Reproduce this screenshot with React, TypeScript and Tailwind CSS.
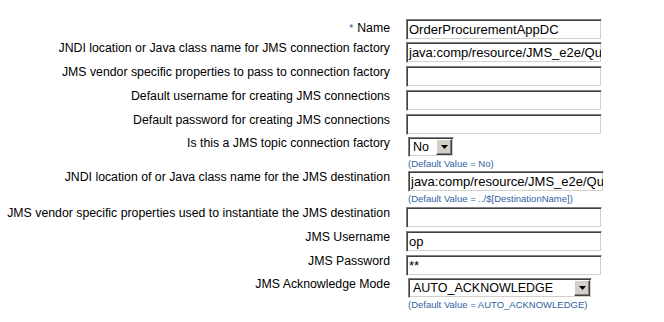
import type { ReactNode } from "react";

const inputBorder =
  "border border-t-[#808080] border-l-[#808080] border-r-[#ffffff] border-b-[#ffffff] shadow-[inset_1px_1px_0_#404040,inset_-1px_-1px_0_#d4d0c8]";

function TextBox({ value, className = "" }: { value?: string; className?: string }) {
  return (
    <div
      className={`h-[21px] w-[196px] overflow-hidden whitespace-nowrap bg-white pl-[2px] pt-[2px] text-[13px] leading-[16px] text-black ${inputBorder} ${className}`}
    >
      {value}
    </div>
  );
}

function SelectBox({ value, width }: { value: string; width: string }) {
  return (
    <div className={`flex h-[20px] items-center bg-white ${inputBorder} ${width}`}>
      <span className="flex-1 pl-[4px] text-[12.5px] leading-[14px] text-black">{value}</span>
      <span className="mr-[1px] flex h-[16px] w-[16px] items-center justify-center border border-t-[#ffffff] border-l-[#ffffff] border-r-[#404040] border-b-[#404040] bg-[#d4d0c8] shadow-[inset_-1px_-1px_0_#808080]">
        <svg width="7" height="4" viewBox="0 0 7 4">
          <path d="M0 0h7L3.5 4z" fill="#000" />
        </svg>
      </span>
    </div>
  );
}

function Hint({ children }: { children: ReactNode }) {
  return (
    <div className="h-[14px] whitespace-nowrap text-[9.5px] leading-[14px] text-[#2f5f9f]">
      {children}
    </div>
  );
}

function Row({
  label,
  children,
  className = "",
  labelClass = "-mt-px",
}: {
  label: ReactNode;
  children: ReactNode;
  className?: string;
  labelClass?: string;
}) {
  return (
    <div className={`flex items-start ${className}`}>
      <div
        className={`w-[390px] whitespace-nowrap text-right text-[12.3px] leading-[14px] text-black ${labelClass}`}
      >
        {label}
      </div>
      <div className="ml-[16px]">{children}</div>
    </div>
  );
}

export default function App() {
  return (
    <div className="h-[322px] w-[664px] overflow-hidden bg-white pt-[19px] font-['Liberation_Sans',Arial,sans-serif]">
      <Row
        className="mb-[2px]"
        labelClass="mt-[2px]"
        label={
          <>
            <span className="mr-[4px] text-[10px] text-[#2f5f9f]">*</span>Name
          </>
        }
      >
        <TextBox value="OrderProcurementAppDC" />
      </Row>
      <Row className="mb-[3px]" label="JNDI location or Java class name for JMS connection factory">
        <TextBox value="java:comp/resource/JMS_e2e/Qu" />
      </Row>
      <Row className="mb-[3px]" label="JMS vendor specific properties to pass to connection factory">
        <TextBox />
      </Row>
      <Row className="mb-[3px]" label="Default username for creating JMS connections">
        <TextBox />
      </Row>
      <Row className="mb-[2px]" label="Default password for creating JMS connections">
        <TextBox />
      </Row>
      <Row label="Is this a JMS topic connection factory">
        <div className="ml-[2px]">
          <SelectBox value="No" width="w-[46px]" />
          <Hint>(Default Value = No)</Hint>
        </div>
      </Row>
      <Row className="mb-[1px]" label="JNDI location of or Java class name for the JMS destination">
        <div className="ml-[2px]">
          <TextBox value="java:comp/resource/JMS_e2e/Qu" />
          <Hint>(Default Value = ../$[DestinationName])</Hint>
        </div>
      </Row>
      <Row
        className="mb-[3px]"
        label="JMS vendor specific properties used to instantiate the JMS destination"
      >
        <TextBox />
      </Row>
      <Row className="mb-[3px]" label="JMS Username">
        <TextBox value="op" />
      </Row>
      <Row className="mb-[2px]" label="JMS Password">
        <TextBox value="**" />
      </Row>
      <Row label="JMS Acknowledge Mode">
        <div className="ml-[2px]">
          <SelectBox value="AUTO_ACKNOWLEDGE" width="w-[184px]" />
          <Hint>(Default Value = AUTO_ACKNOWLEDGE)</Hint>
        </div>
      </Row>
    </div>
  );
}
